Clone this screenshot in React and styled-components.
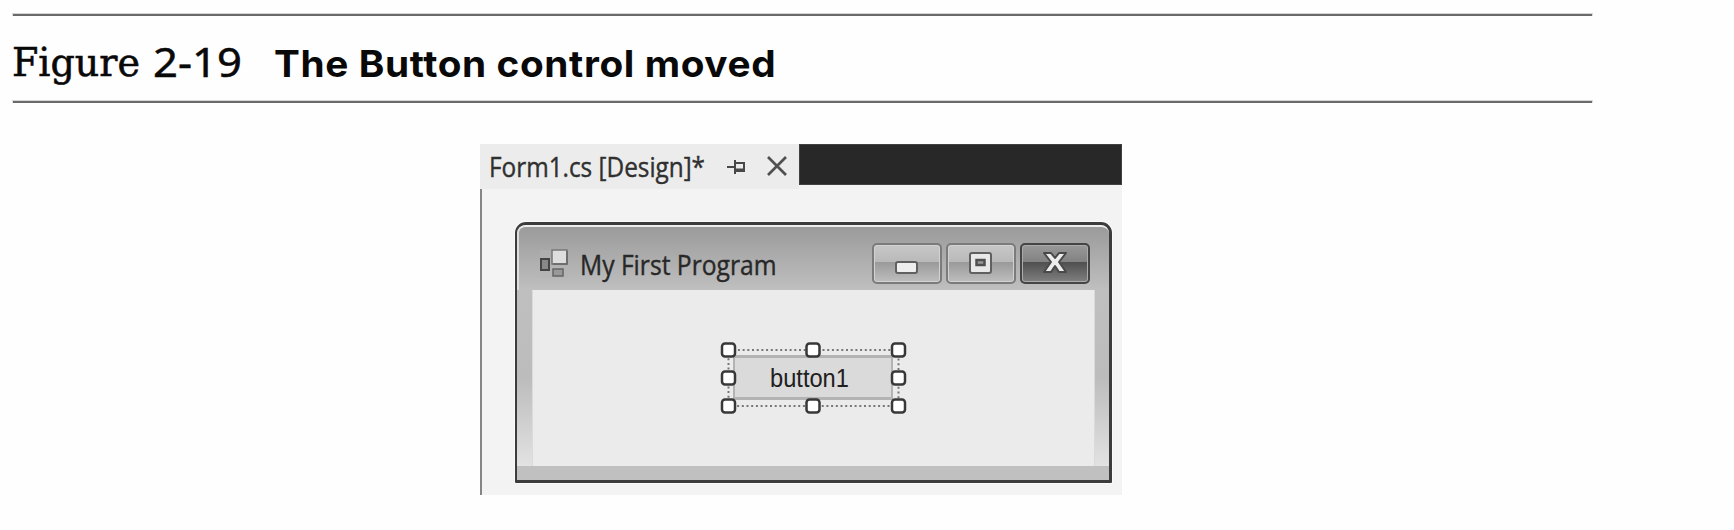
import React from "react";
import styled, { createGlobalStyle } from "styled-components";

const GlobalStyle = createGlobalStyle`
  *, *::before, *::after { box-sizing: border-box; }
  body { margin: 0; background: #fefefe; }
`;

const Page = styled.main`
  width: 1734px;
  height: 530px;
  padding: 13px 0 0 12px;
  background: #fefefe;
  overflow: hidden;
`;

const Caption = styled.header`
  width: 1581px;
  height: 90px;
  display: flex;
  flex-direction: column;
  justify-content: space-between;
`;

const Rule = styled.div`
  height: 3px;
  background: #6a6a6a;
  border-top: 1px solid #d6d6d6;
  border-right: 1px solid #dedede;
  border-left: 1px solid #dedede;
`;

const CaptionRow = styled.h1`
  margin: 0;
  height: 84px;
  display: flex;
  font-weight: 400;
  color: #090909;
  white-space: nowrap;
`;

const Fitted = styled.span`
  display: block;
  flex: none;
  transform-origin: 0 50%;
  transform: scaleX(${(p) => p.$stretch || 1});
  white-space: pre;
`;

const FigureWord = styled.div`
  width: 141px;
  font: 400 40px/92px "DejaVu Serif", serif;
  -webkit-text-stroke: 0.6px #090909;
`;

const FigureNumber = styled.div`
  width: 121px;
  font: 400 40px/92px "Noto Sans", sans-serif;
  -webkit-text-stroke: 0.5px #090909;
`;

const FigureTitle = styled.div`
  font: 650 37px/95px Inter, sans-serif;
  letter-spacing: 0.6px;
`;

const Editor = styled.section`
  width: 642px;
  height: 351px;
  margin: 41px 0 0 468px;
  display: flex;
  flex-direction: column;
  background: #f3f3f3;
`;

const TabBar = styled.div`
  height: 45px;
  display: flex;
  align-items: flex-start;
`;

const Tab = styled.div`
  width: 319px;
  height: 45px;
  display: flex;
  align-items: center;
  padding-left: 9px;
  background: #ececec;
  color: #303030;
`;

const TabName = styled.div`
  width: 238px;
  font: 400 27px/45px "Open Sans", sans-serif;
  -webkit-text-stroke: 0.4px #303030;
`;

const PinIcon = styled.svg`
  width: 20px;
  height: 18px;
  margin-right: 19px;
`;

const CloseIcon = styled.svg`
  width: 22px;
  height: 20px;
  margin-bottom: 2px;
`;

const TabStrip = styled.div`
  flex: 1;
  height: 41px;
  background: #282828;
  border: 1px solid #414141;
`;

const Surface = styled.div`
  flex: 1;
  padding: 33px 0 0 33px;
  border-left: 2px solid #858585;
`;

const FormWindow = styled.div`
  width: 597px;
  height: 261px;
  display: flex;
  flex-direction: column;
  border: 3px solid #3c3c3c;
  border-left-width: 2px;
  border-radius: 11px 11px 1px 1px;
  background: #c0c0c0;
  box-shadow: 0 0 0 1px #fafafa;
  overflow: hidden;
`;

const TitleBar = styled.div`
  height: 65px;
  flex: none;
  display: flex;
  padding: 16px 19px 0 20px;
  border-top: 2px solid #ededed;
  border-left: 2px solid #dedede;
  border-top-left-radius: 8px;
  border-top-right-radius: 8px;
  background: linear-gradient(#9b9b9b, #bfbfbf);
`;

const ProgramIcon = styled.svg`
  width: 30px;
  height: 30px;
  margin-top: 6px;
`;

const WindowName = styled.div`
  width: 280px;
  margin-left: 11px;
  font: 400 28px/42px "Open Sans", sans-serif;
  color: #282828;
  -webkit-text-stroke: 0.4px #282828;
`;

const WindowButtons = styled.div`
  display: flex;
  gap: 4px;
  margin-left: auto;
`;

const WindowButton = styled.button`
  width: 70px;
  height: 41px;
  padding: 0;
  display: flex;
  align-items: center;
  justify-content: center;
  border: 2px solid ${(p) => (p.$dark ? "#454545" : "#7b7b7b")};
  border-radius: 5px;
  box-shadow: inset 0 0 0 1px ${(p) => (p.$dark ? "#ababab" : "#d2d2d2")};
  background: ${(p) =>
    p.$dark
      ? "linear-gradient(#999, #828282 46%, #505050 47%, #808080)"
      : "linear-gradient(#c7c7c7, #b9b9b9 46%, #9a9a9a 47%, #bebebe)"};
`;

const Glyph = styled.svg`
  display: block;
  height: 24px;
  margin-bottom: ${(p) => p.$lift || 0}px;
`;

const Frame = styled.div`
  flex: 1;
  display: flex;
  padding: 0 14px 0 15px;
  border-bottom: 14px solid #c0c0c0;
  background: linear-gradient(#bfbfbf 0%, #bcbcbc 50%, #e2e2e2 100%);
`;

const Client = styled.div`
  flex: 1;
  padding: 52px 0 0 187px;
  background: #ebebeb;
  border-left: 1px solid #dadada;
  border-right: 1px solid #dadada;
`;

const Selection = styled.div`
  position: relative;
  width: 187px;
  height: 71px;
  padding: 13px 14px 13px 13px;
`;

const DottedOutline = styled.svg`
  position: absolute;
  inset: 0;
  width: 187px;
  height: 71px;
  overflow: visible;
`;

const FormButton = styled.div`
  height: 45px;
  padding-left: 35px;
  border: 3px solid #b3b3b3;
  border-left-width: 2px;
  border-right-width: 2px;
  background: #dadada;
  font: 400 26px/41px "Liberation Sans", Arial, sans-serif;
  color: #202020;
`;

const handles = [
  [8.5, 8], [93, 8], [178.5, 8],
  [8.5, 36], [178.5, 36],
  [8.5, 64], [93, 64], [178.5, 64],
];

export default function App() {
  return (
    <Page>
      <GlobalStyle />
      <Caption>
        <Rule />
        <CaptionRow>
          <FigureWord><Fitted $stretch={0.95}>Figure</Fitted></FigureWord>
          <FigureNumber><Fitted $stretch={1.09}>2-19</Fitted></FigureNumber>
          <FigureTitle><Fitted $stretch={1.047}>The Button control moved</Fitted></FigureTitle>
        </CaptionRow>
        <Rule />
      </Caption>
      <Editor>
        <TabBar>
          <Tab>
            <TabName><Fitted $stretch={0.901}>Form1.cs [Design]*</Fitted></TabName>
            <PinIcon viewBox="0 0 20 18" fill="none" stroke="#484848" strokeWidth="2">
              <path d="M0 9H8M8 2V16M8 5H17V13H8" />
              <path d="M8 12H18" strokeWidth="3" />
            </PinIcon>
            <CloseIcon viewBox="0 0 22 20" fill="none" stroke="#505050" strokeWidth="2.7">
              <path d="M2 1L20 19M20 1L2 19" />
            </CloseIcon>
          </Tab>
          <TabStrip />
        </TabBar>
        <Surface>
          <FormWindow>
            <TitleBar>
              <ProgramIcon viewBox="0 0 30 30">
                <path d="M1 1H29V29H1Z" fill="#b4b4b4" opacity=".45" />
                <rect x="2" y="10" width="8" height="11" fill="#888" stroke="#444" strokeWidth="2" />
                <rect x="13" y="1" width="15" height="14" fill="#dedede" stroke="#777" strokeWidth="1.5" />
                <path d="M14 15H28V2" fill="none" stroke="#666" strokeWidth="1.5" />
                <rect x="14" y="20" width="10" height="7" fill="#999" stroke="#666" strokeWidth="1.5" />
              </ProgramIcon>
              <WindowName><Fitted $stretch={0.88}>My First Program</Fitted></WindowName>
              <WindowButtons>
                <WindowButton aria-label="Minimize">
                  <Glyph width="24" viewBox="0 0 24 24">
                    <rect x="1" y="10" width="21" height="11" rx="2" fill="#eee" stroke="#606060" strokeWidth="2" />
                  </Glyph>
                </WindowButton>
                <WindowButton aria-label="Maximize">
                  <Glyph width="24" viewBox="0 0 24 24">
                    <rect x="1" y="1" width="21" height="20" rx="2" fill="#e9e9e9" stroke="#606060" strokeWidth="2" />
                    <rect x="7.5" y="8" width="8" height="5" fill="#999" stroke="#505050" strokeWidth="2.5" />
                  </Glyph>
                </WindowButton>
                <WindowButton $dark aria-label="Close">
                  <Glyph width="26" $lift={1} viewBox="0 0 26 24">
                    <path d="M2 2H9L13 7L17 2H24L17 11L24 21H17L13 15L9 21H2L9 11Z" fill="#ededed" stroke="#494949" strokeWidth="2" strokeLinejoin="round" />
                  </Glyph>
                </WindowButton>
              </WindowButtons>
            </TitleBar>
            <Frame>
              <Client>
                <Selection>
                  <FormButton><Fitted $stretch={0.91}>button1</Fitted></FormButton>
                  <DottedOutline viewBox="0 0 187 71">
                    <rect x="8.5" y="8" width="170" height="56" fill="none" stroke="#777" strokeWidth="2" strokeDasharray="2 2.7" />
                    {handles.map(([x, y]) => (
                      <rect key={`${x}-${y}`} x={x - 6.5} y={y - 6.5} width="13" height="13" rx="3" fill="#fff" stroke="#383838" strokeWidth="2.5" />
                    ))}
                  </DottedOutline>
                </Selection>
              </Client>
            </Frame>
          </FormWindow>
        </Surface>
      </Editor>
    </Page>
  );
}
